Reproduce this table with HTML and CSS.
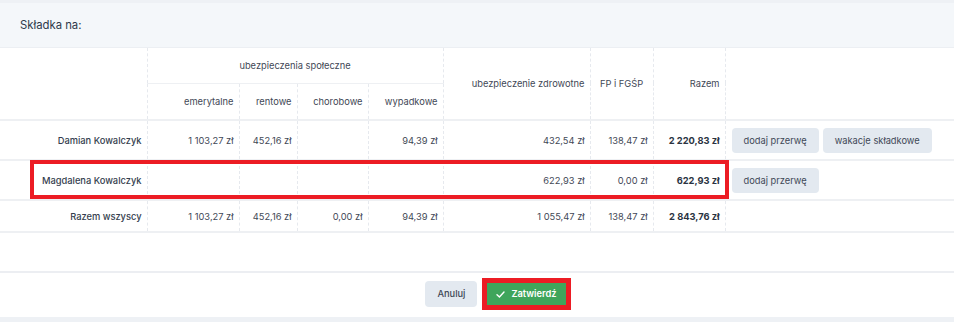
FILE: index.html
```html
<!DOCTYPE html>
<html lang="pl">
<head>
<meta charset="utf-8">
<link rel="stylesheet" href="styles.css">
</head>
<body>
<div class="card">
  <div class="card-head">Składka na:</div>
  <div class="table-wrap">
    <table class="grid">
      <colgroup>
        <col style="width:147px"><col style="width:92px"><col style="width:58px"><col style="width:71px"><col style="width:75px"><col style="width:147px"><col style="width:63px"><col style="width:72px"><col>
      </colgroup>
      <thead>
        <tr class="h1">
          <th rowspan="2"></th>
          <th colspan="4" class="center">ubezpieczenia społeczne</th>
          <th rowspan="2">ubezpieczenie zdrowotne</th>
          <th rowspan="2" class="center">FP i FGŚP</th>
          <th rowspan="2">Razem</th>
          <th rowspan="2" class="last"></th>
        </tr>
        <tr class="h2">
          <th>emerytalne</th>
          <th>rentowe</th>
          <th>chorobowe</th>
          <th>wypadkowe</th>
        </tr>
      </thead>
      <tbody>
        <tr class="r-btn">
          <td class="name">Damian Kowalczyk</td>
          <td>1 103,27 zł</td><td>452,16 zł</td><td></td><td>94,39 zł</td>
          <td>432,54 zł</td><td>138,47 zł</td><td class="sum">2 220,83 zł</td>
          <td class="actions"><span class="btn">dodaj przerwę</span><span class="btn">wakacje składkowe</span></td>
        </tr>
        <tr class="r-btn">
          <td class="name">Magdalena Kowalczyk</td>
          <td></td><td></td><td></td><td></td>
          <td>622,93 zł</td><td>0,00 zł</td><td class="sum">622,93 zł</td>
          <td class="actions"><span class="btn">dodaj przerwę</span></td>
        </tr>
        <tr class="r-total">
          <td class="name">Razem wszyscy</td>
          <td>1 103,27 zł</td><td>452,16 zł</td><td>0,00 zł</td><td>94,39 zł</td>
          <td>1 055,47 zł</td><td>138,47 zł</td><td class="sum">2 843,76 zł</td>
          <td class="actions"></td>
        </tr>
      </tbody>
    </table>
    <div class="mark mark-row"></div>
  </div>
  <div class="spacer"></div>
  <div class="card-foot">
    <span class="btn btn-cancel">Anuluj</span>
    <span class="btn-ok-wrap">
      <span class="btn btn-ok">
        <svg width="9" height="7" viewBox="0 0 10 8" aria-hidden="true"><path d="M1 4.2 L3.8 6.8 L9 1.2" fill="none" stroke="#fff" stroke-width="1.6" stroke-linecap="round" stroke-linejoin="round"/></svg>
        Zatwierdź
      </span>
    </span>
  </div>
</div>
</body>
</html>
```

FILE: styles.css
```css
* { box-sizing: border-box; }
html, body { margin: 0; padding: 0; }
body {
  background: #eef1f5;
  font-family: Inter, "Noto Sans", sans-serif;
  color: #3f4856;
  width: 954px;
  height: 322px;
  overflow: hidden;
  padding-top: 3px;
}
.card {
  background: #fff;
  height: 314px;
  display: flex;
  flex-direction: column;
}
.card-head {
  background: #f4f7fa;
  height: 45px;
  padding-left: 20px;
  display: flex;
  align-items: center;
  font-size: 11.3px;
  color: #2f3a4a;
  border-bottom: 1px solid #eceff3;
}
.table-wrap { position: relative; }
.grid {
  width: 954px;
  border-collapse: collapse;
  table-layout: fixed;
  font-size: 9.3px;
}
.grid th, .grid td {
  text-align: right;
  padding: 0 5px;
  border-left: 1px dashed #e6e9ee;
  white-space: nowrap;
}
.grid th:first-child, .grid td:first-child { border-left: none; }
.grid th { font-weight: 400; color: #3f4856; }
.grid th.center { text-align: center; }
.grid .h1 th { height: 35px; }
.grid .h2 th { height: 37px; border-top: 1px solid #eef0f3; }
.grid thead tr.h2 th:first-child { border-left: 1px dashed #e6e9ee; }
.grid tbody tr { border-top: 2px solid #eef0f3; }
.grid tbody tr:last-child { border-bottom: 2px solid #eef0f3; }
.grid .r-btn td { height: 40px; }
.grid .r-total td { height: 32px; }
.grid td.name { font-weight: 500; color: #343e4e; padding-right: 5px; }
.grid td.sum { font-weight: 700; color: #2a3342; }
.grid td.actions { text-align: left; padding-left: 6px; }
.btn {
  display: inline-block;
  background: #e3e9f0;
  color: #3f4856;
  border-radius: 4px;
  font-size: 9.3px;
  line-height: 25px;
  height: 25px;
  padding: 0 12px;
  margin-right: 4px;
  vertical-align: middle;
}
.mark {
  position: absolute;
  border: 4px solid #ec1c24;
  pointer-events: none;
}
.mark-row { left: 30px; top: 112px; width: 699px; height: 39px; }
.spacer { height: 40px; border-bottom: 2px solid #eceef2; }
.card-foot {
  flex: 1;
  display: flex;
  justify-content: center;
  align-items: center;
  padding-left: 42px;
  gap: 5px;
  padding-bottom: 2px;
}
.btn-cancel { height: 26px; line-height: 26px; padding: 0 12px; margin: 0; font-weight: 500; }
.btn-ok-wrap { border: 5px solid #ec1c24; display: inline-flex; }
.btn-ok {
  background: #3fa55b;
  color: #fff;
  border-radius: 0;
  height: 22px;
  line-height: 22px;
  padding: 0 9px;
  margin: 0;
  font-weight: 600;
  display: inline-flex;
  align-items: center;
  gap: 6px;
}
```
